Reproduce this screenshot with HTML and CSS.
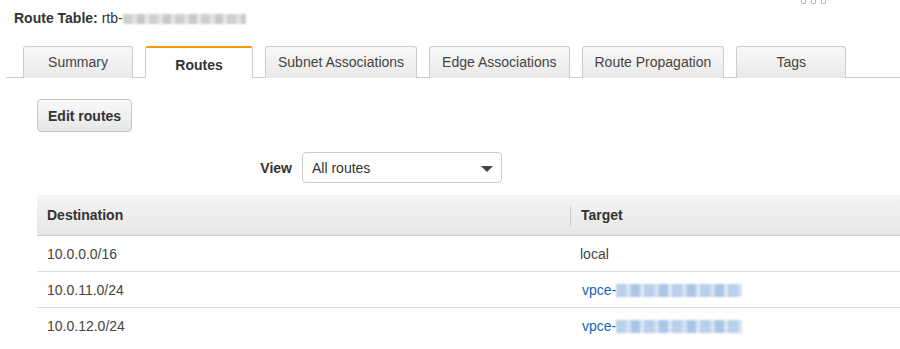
FILE: index.html
```html
<!DOCTYPE html>
<html lang="en">
<head>
  <meta charset="UTF-8" />
  <title>Route Table</title>
  <link rel="stylesheet" href="styles.css">
</head>
<body>

  <div class="top-bar">
    <h1 class="title">Route Table: <span class="title-id">rtb-<span class="blur-gray"></span></span></h1>
    <div class="win-dots"><i></i><i></i><i></i></div>
  </div>

  <ul class="tabs">
    <li class="tab">Summary</li>
    <li class="tab active">Routes</li>
    <li class="tab">Subnet Associations</li>
    <li class="tab">Edge Associations</li>
    <li class="tab">Route Propagation</li>
    <li class="tab">Tags</li>
  </ul>

  <div class="content">
    <button class="btn">Edit routes</button>

    <div class="view-row">
      <label class="view-label">View</label>
      <div class="select">
        <span>All routes</span>
        <span class="caret"></span>
      </div>
    </div>

    <table class="routes">
      <thead>
        <tr>
          <th class="col-dest">Destination</th>
          <th class="col-target"><span class="divider"></span>Target</th>
        </tr>
      </thead>
      <tbody>
        <tr>
          <td>10.0.0.0/16</td>
          <td class="col-target">local</td>
        </tr>
        <tr>
          <td>10.0.11.0/24</td>
          <td class="col-target"><a href="#" class="link">vpce-<span class="blur-blue"></span></a></td>
        </tr>
        <tr>
          <td>10.0.12.0/24</td>
          <td class="col-target"><a href="#" class="link">vpce-<span class="blur-blue"></span></a></td>
        </tr>
      </tbody>
    </table>
  </div>

</body>
</html>
```

FILE: styles.css
```css
body {
  font-family: 'Liberation Sans', Arial, sans-serif;
  font-size: 14px;
  color: #444;
  background: #fff;
  margin: 0;
  padding: 0;
}
.top-bar {
  display: flex;
  justify-content: space-between;
  align-items: flex-start;
  height: 46px;
}
.title {
  margin: 0;
  padding: 10px 0 0 14px;
  font-size: 14px;
  font-weight: bold;
  color: #333;
  line-height: 16px;
}
.title-id {
  font-weight: normal;
}
.blur-gray {
  display: inline-block;
  width: 123px;
  height: 10px;
  vertical-align: -1px;
  background: repeating-linear-gradient(90deg, #cfcfcf 0 9px, #e2e2e2 9px 14px, #c8c8c8 14px 22px, #e8e8e8 22px 26px);
  filter: blur(0.8px);
}
.win-dots {
  display: flex;
  gap: 5px;
  margin: -1px 74px 0 0;
}
.win-dots i {
  width: 3px;
  height: 3px;
  border: 1px solid #bbb;
  border-radius: 1px;
}
.tabs {
  list-style: none;
  display: flex;
  gap: 12px;
  margin: 0 0 0 6px;
  padding: 0 0 0 17px;
  border-bottom: 1px solid #ccc;
  height: 31px;
}
.tab {
  box-sizing: border-box;
  min-width: 110px;
  height: 32px;
  padding: 7px 12px 0;
  text-align: center;
  color: #444;
  background: linear-gradient(#f8f8f8, #e9e9e9);
  border: 1px solid #ccc;
  border-bottom: none;
  border-radius: 3px 3px 0 0;
}
.tab.active {
  min-width: 108px;
  padding-top: 9px;
  font-weight: bold;
  color: #333;
  background: #fff;
  border-top: 2px solid #f90;
}
.content {
  padding: 21px 0 0 37px;
}
.btn {
  font-family: inherit;
  font-size: 14px;
  font-weight: bold;
  color: #333;
  height: 33px;
  padding: 0 10px;
  background: linear-gradient(#fafafa, #e6e6e6);
  border: 1px solid #c4c4c4;
  border-radius: 4px;
}
.view-row {
  display: flex;
  align-items: center;
  gap: 10px;
  margin-top: 20px;
}
.view-label {
  width: 255px;
  text-align: right;
  font-weight: bold;
  color: #333;
}
.select {
  box-sizing: border-box;
  width: 200px;
  height: 31px;
  display: flex;
  align-items: center;
  justify-content: space-between;
  padding: 0 8px 0 9px;
  border: 1px solid #ccc;
  border-radius: 4px;
  color: #333;
}
.caret {
  width: 0;
  height: 0;
  border-left: 6px solid transparent;
  border-right: 6px solid transparent;
  border-top: 6px solid #444;
  margin-top: 2px;
}
.routes {
  width: 863px;
  margin-top: 12px;
  border-collapse: collapse;
}
.routes th {
  height: 40px;
  text-align: left;
  font-weight: bold;
  color: #333;
  background: linear-gradient(#f4f4f4, #e7e7e7);
  border-bottom: 1px solid #ccc;
  padding: 0 10px;
}
.routes td {
  height: 35px;
  padding: 0 10px;
  border-bottom: 1px solid #ddd;
  color: #444;
}
.routes tr:last-child td {
  border-bottom: none;
}
.col-dest {
  width: 513px;
}
.routes .col-target {
  padding-left: 10px;
}
.routes th.col-target {
  position: relative;
  padding-left: 11px;
}
.divider {
  position: absolute;
  left: 0;
  top: 11px;
  height: 20px;
  border-left: 1px solid #ccc;
}
.link {
  color: #1166bb;
  text-decoration: none;
  margin-left: 2px;
}
.blur-blue {
  display: inline-block;
  width: 126px;
  height: 13px;
  vertical-align: -2px;
  background: repeating-linear-gradient(90deg, #b9cfea 0 10px, #d3e1f2 10px 15px, #aac5e6 15px 24px, #dce7f5 24px 28px);
  filter: blur(0.8px);
}
```
